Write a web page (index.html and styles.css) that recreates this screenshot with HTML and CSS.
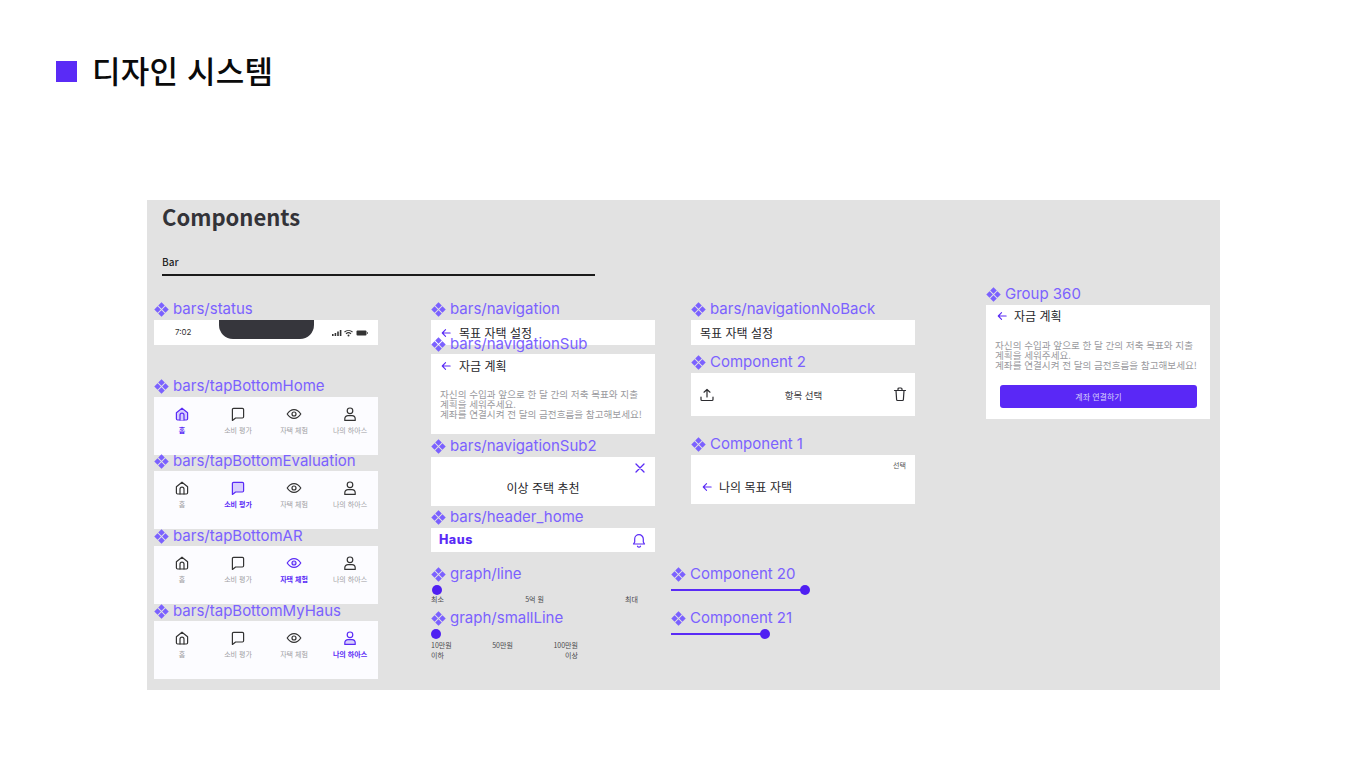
FILE: index.html
```html
<!DOCTYPE html>
<html lang="ko">
<head>
<meta charset="utf-8">
<title>디자인 시스템</title>
<link rel="stylesheet" href="styles.css">
</head>
<body>
<svg class="sprite" aria-hidden="true">
  <symbol id="comp" viewBox="0 0 16 16"><path d="M8 .3 11.5 3.800 8 7.300 4.500 3.800zM3.800 4.500 7.300 8 3.800 11.500 .3 8zM12.200 4.500 15.700 8 12.200 11.500 8.700 8zM8 8.700 11.500 12.200 8 15.700 4.500 12.200z" fill="currentColor"/></symbol>
  <symbol id="home" viewBox="0 0 20 20"><path d="M3 8.500 10 2.800l7 5.700V16a1.500 1.500 0 0 1-1.500 1.500h-11A1.500 1.500 0 0 1 3 16z"/><path d="M7.500 17.500v-6a2.500 2.500 0 0 1 5 0v6"/></symbol>
  <symbol id="chat" viewBox="0 0 20 20"><path d="M3 4.500A1.500 1.500 0 0 1 4.500 3h11A1.500 1.500 0 0 1 17 4.500v9a1.500 1.500 0 0 1-1.500 1.500H7l-4 3z"/></symbol>
  <symbol id="eye" viewBox="0 0 20 20"><path d="M1.500 10S5 4.500 10 4.500 18.500 10 18.500 10 15 15.500 10 15.500 1.500 10 1.500 10z" fill="none"/><circle cx="10" cy="10" r="2.500"/></symbol>
  <symbol id="person" viewBox="0 0 20 20"><circle cx="10" cy="6" r="3.500" fill="none"/><path d="M3.500 18v-2a4 4 0 0 1 4-4h5a4 4 0 0 1 4 4v2z"/></symbol>
  <symbol id="back" viewBox="0 0 12 12"><path d="M11 6H1.500M5.500 2 1.500 6l4 4"/></symbol>
</svg>

<header class="slide-title">
  <span class="square"></span>
  <h1>디자인 시스템</h1>
</header>

<main class="frame">
  <h2 class="heading">Components</h2>
  <div class="section">Bar</div>

  <section class="node n-status">
    <div class="label"><svg class="diamond"><use href="#comp"/></svg>bars/status</div>
    <div class="panel status">
      <span class="clock">7:02</span>
      <span class="notch"></span>
      <svg class="sys" width="36" height="8" viewBox="0 0 36 8">
        <path d="M0 5h1.600v2H0zM2.600 4h1.600v3H2.600zM5.200 2.500h1.600V7H5.200zM7.800 1h1.600v6H7.800z" fill="#333"/>
        <path d="M12.500 3a6 6 0 0 1 8 0M14 4.800a3.600 3.600 0 0 1 5 0" fill="none" stroke="#333" stroke-width="1.100"/>
        <circle cx="16.500" cy="6.400" r="1" fill="#333"/>
        <rect x="24.500" y="1.500" width="10" height="5" rx="1" fill="#333"/>
        <rect x="35" y="3" width="1" height="2" fill="#777"/>
      </svg>
    </div>
  </section>

  <section class="node n-home">
    <div class="label"><svg class="diamond"><use href="#comp"/></svg>bars/tapBottomHome</div>
    <div class="panel tabs">
      <div class="tab active"><svg class="ico"><use href="#home"/></svg><span>홈</span></div>
      <div class="tab"><svg class="ico"><use href="#chat"/></svg><span>소비 평가</span></div>
      <div class="tab"><svg class="ico"><use href="#eye"/></svg><span>자택 체험</span></div>
      <div class="tab"><svg class="ico"><use href="#person"/></svg><span>나의 하아스</span></div>
    </div>
  </section>

  <section class="node n-eval">
    <div class="label low"><svg class="diamond"><use href="#comp"/></svg>bars/tapBottomEvaluation</div>
    <div class="panel tabs">
      <div class="tab"><svg class="ico"><use href="#home"/></svg><span>홈</span></div>
      <div class="tab active"><svg class="ico"><use href="#chat"/></svg><span>소비 평가</span></div>
      <div class="tab"><svg class="ico"><use href="#eye"/></svg><span>자택 체험</span></div>
      <div class="tab"><svg class="ico"><use href="#person"/></svg><span>나의 하아스</span></div>
    </div>
  </section>

  <section class="node n-ar">
    <div class="label low"><svg class="diamond"><use href="#comp"/></svg>bars/tapBottomAR</div>
    <div class="panel tabs">
      <div class="tab"><svg class="ico"><use href="#home"/></svg><span>홈</span></div>
      <div class="tab"><svg class="ico"><use href="#chat"/></svg><span>소비 평가</span></div>
      <div class="tab active"><svg class="ico"><use href="#eye"/></svg><span>자택 체험</span></div>
      <div class="tab"><svg class="ico"><use href="#person"/></svg><span>나의 하아스</span></div>
    </div>
  </section>

  <section class="node n-my">
    <div class="label low"><svg class="diamond"><use href="#comp"/></svg>bars/tapBottomMyHaus</div>
    <div class="panel tabs">
      <div class="tab"><svg class="ico"><use href="#home"/></svg><span>홈</span></div>
      <div class="tab"><svg class="ico"><use href="#chat"/></svg><span>소비 평가</span></div>
      <div class="tab"><svg class="ico"><use href="#eye"/></svg><span>자택 체험</span></div>
      <div class="tab active"><svg class="ico"><use href="#person"/></svg><span>나의 하아스</span></div>
    </div>
  </section>

  <section class="node n-nav">
    <div class="label"><svg class="diamond"><use href="#comp"/></svg>bars/navigation</div>
    <div class="panel bar"><svg class="back"><use href="#back"/></svg><span class="bar-title">목표 자택 설정</span></div>
  </section>

  <section class="node n-sub">
    <div class="label low"><svg class="diamond"><use href="#comp"/></svg>bars/navigationSub</div>
    <div class="panel sub">
      <div class="sub-head"><svg class="back"><use href="#back"/></svg><span class="bar-title">자금 계획</span></div>
      <p class="desc">자신의 수입과 앞으로 한 달 간의 저축 목표와 지출<br>계획을 세워주세요.<br>계좌를 연결시켜 전 달의 금전흐름을 참고해보세요!</p>
    </div>
  </section>

  <section class="node n-sub2">
    <div class="label"><svg class="diamond"><use href="#comp"/></svg>bars/navigationSub2</div>
    <div class="panel sub2">
      <svg class="close" width="10" height="10" viewBox="0 0 10 10"><path d="M1 1l8 8M9 1 1 9"/></svg>
      <span class="bar-title">이상 주택 추천</span>
    </div>
  </section>

  <section class="node n-header">
    <div class="label"><svg class="diamond"><use href="#comp"/></svg>bars/header_home</div>
    <div class="panel head-home">
      <span class="logo">Haus</span>
      <svg class="bell" width="14" height="15" viewBox="0 0 14 15"><path d="M1.500 11h11l-1.200-2V6a4.300 4.300 0 0 0-8.600 0v3zM5.500 13.200a1.700 1.700 0 0 0 3 0"/></svg>
    </div>
  </section>

  <section class="node n-line">
    <div class="label"><svg class="diamond"><use href="#comp"/></svg>graph/line</div>
    <span class="dot dot-line"></span>
    <div class="scale scale-line"><span>최소</span><span>5억 원</span><span>최대</span></div>
  </section>

  <section class="node n-small">
    <div class="label"><svg class="diamond"><use href="#comp"/></svg>graph/smallLine</div>
    <span class="dot dot-small"></span>
    <div class="scale scale-small"><span>10만원</span><span>50만원</span><span>100만원</span></div>
    <div class="scale scale-small2"><span>이하</span><span>이상</span></div>
  </section>

  <section class="node n-noback">
    <div class="label"><svg class="diamond"><use href="#comp"/></svg>bars/navigationNoBack</div>
    <div class="panel bar noback"><span class="bar-title">목표 자택 설정</span></div>
  </section>

  <section class="node n-c2">
    <div class="label"><svg class="diamond"><use href="#comp"/></svg>Component 2</div>
    <div class="panel c2">
      <svg class="tool" width="14" height="14" viewBox="0 0 14 14"><path d="M7 9V1.500M4 4.200 7 1.500l3 2.700M1 9v2.500A1 1 0 0 0 2 12.500h10a1 1 0 0 0 1-1V9"/></svg>
      <span class="c2-title">항목 선택</span>
      <svg class="tool" width="14" height="15" viewBox="0 0 14 15"><path d="M1.500 3.500h11M3 3.500l.6 9a1 1 0 0 0 1 1h4.800a1 1 0 0 0 1-1l.6-9M5 3.500V2a1 1 0 0 1 1-1h2a1 1 0 0 1 1 1v1.500"/></svg>
    </div>
  </section>

  <section class="node n-c1">
    <div class="label"><svg class="diamond"><use href="#comp"/></svg>Component 1</div>
    <div class="panel c1">
      <span class="c1-select">선택</span>
      <div class="c1-row"><svg class="back"><use href="#back"/></svg><span class="bar-title">나의 목표 자택</span></div>
    </div>
  </section>

  <section class="node n-c20">
    <div class="label"><svg class="diamond"><use href="#comp"/></svg>Component 20</div>
    <div class="slider s-20"></div>
  </section>

  <section class="node n-c21">
    <div class="label"><svg class="diamond"><use href="#comp"/></svg>Component 21</div>
    <div class="slider s-21"></div>
  </section>

  <section class="node n-group">
    <div class="label"><svg class="diamond"><use href="#comp"/></svg>Group 360</div>
    <div class="panel group">
      <div class="sub-head group-head"><svg class="back"><use href="#back"/></svg><span class="bar-title">자금 계획</span></div>
      <p class="desc group-desc">자신의 수입과 앞으로 한 달 간의 저축 목표와 지출<br>계획을 세워주세요.<br>계좌를 연결시켜 전 달의 금전흐름을 참고해보세요!</p>
      <div class="cta">계좌 연결하기</div>
    </div>
  </section>
</main>
</body>
</html>
```
FILE: styles.css
```css
* { box-sizing: border-box; }
html, body { margin: 0; padding: 0; }
body {
  width: 1366px;
  height: 768px;
  overflow: hidden;
  background: #fff;
  font-family: "Inter", "Noto Sans CJK KR", sans-serif;
  padding: 51px 0 0 56px;
}
.sprite { position: absolute; width: 0; height: 0; }

.slide-title { display: flex; align-items: center; gap: 15px; height: 40px; }
.square { width: 21px; height: 21px; background: #5a2bf6; }
h1 {
  margin: 0;
  height: 40px;
  font: 500 31px/38px "Noto Sans CJK KR", sans-serif;
  letter-spacing: 0.2px;
  color: #0a0a0a;
}

.frame {
  position: relative;
  width: 1073px;
  height: 490px;
  margin: 109px 0 0 91px;
  background: #e2e2e2;
  padding: 0 15px;
}
.heading {
  margin: 0;
  height: 36px;
  font: 700 22px/33px "Noto Sans CJK KR", sans-serif;
  color: #333338;
}
.section {
  width: 433px;
  height: 26px;
  margin-top: 14px;
  border-bottom: 2px solid #1a1a1a;
  font: 500 10px/24px "Noto Sans CJK KR", sans-serif;
  color: #222;
}

.node { position: absolute; width: 224px; }
.label {
  display: flex;
  align-items: center;
  gap: 4px;
  height: 20px;
  margin-bottom: 1px;
  position: relative;
  white-space: nowrap;
  font: 400 15px/20px "Inter", sans-serif;
  color: #7b61ff;
}
.low { padding-top: 2px; }
.diamond { width: 15px; height: 15px; color: #7b61ff; flex: none; }
.panel { background: #fff; width: 224px; }

.n-status { left: 7px; top: 99px; }
.n-home { left: 7px; top: 176px; }
.n-eval { left: 7px; top: 250px; }
.n-ar { left: 7px; top: 325px; }
.n-my { left: 7px; top: 400px; }
.n-nav { left: 284px; top: 99px; }
.n-sub { left: 284px; top: 133px; }
.n-sub2 { left: 284px; top: 236px; }
.n-header { left: 284px; top: 307px; }
.n-line { left: 284px; top: 364px; }
.n-small { left: 284px; top: 408px; }
.n-noback { left: 544px; top: 99px; }
.n-c2 { left: 544px; top: 152px; }
.n-c1 { left: 544px; top: 234px; }
.n-c20 { left: 524px; top: 364px; }
.n-c21 { left: 524px; top: 408px; }
.n-group { left: 839px; top: 84px; }

/* status */
.status {
  height: 25px;
  display: flex;
  justify-content: space-between;
  align-items: center;
  padding: 0 10px 0 21px;
}
.clock { font: 400 8px/1 "Inter", sans-serif; color: #333; margin-bottom: 2px; }
.notch {
  position: absolute;
  left: 65px;
  top: 21px;
  width: 95px;
  height: 19px;
  background: #36363c;
  border-radius: 0 0 14px 14px;
}
.sys { display: block; }

/* tabs */
.tabs {
  height: 58px;
  background: #fcfcff;
  display: grid;
  grid-template-columns: repeat(4, 56px);
  padding-top: 9px;
  align-content: start;
}
.tab {
  display: flex;
  flex-direction: column;
  align-items: center;
  gap: 3px;
  font: 400 7px/10px "Noto Sans CJK KR", sans-serif;
  color: #a0a0a4;
  white-space: nowrap;
}
.ico {
  width: 16px;
  height: 16px;
  fill: none;
  stroke: #333;
  stroke-width: 1.500;
  stroke-linejoin: round;
  stroke-linecap: round;
}
.active { color: #5a2bf6; font-weight: 700; }
.active .ico { stroke: #5a2bf6; fill: #d8cffd; }

/* nav bars */
.bar { height: 25px; display: flex; align-items: center; padding: 0 0 0 10px; gap: 8px; }
.noback { padding: 1px 0 0 9px; }
.back {
  width: 10px;
  height: 10px;
  flex: none;
  fill: none;
  stroke: #5a2bf6;
  stroke-width: 1.300;
  stroke-linecap: round;
  stroke-linejoin: round;
}
.bar-title { font: 400 12px/16px "Noto Sans CJK KR", sans-serif; color: #26262a; white-space: nowrap; }
.sub { height: 80px; }
.sub-head { height: 24px; display: flex; align-items: center; gap: 8px; padding-left: 10px; }
.desc {
  margin: 11px 0 0 9px;
  font: 400 9.600px/10px "Noto Sans CJK KR", sans-serif;
  color: #9a9a9e;
  white-space: nowrap;
}
.group-desc { margin-top: 13px; }
.sub2 { height: 49px; display: flex; flex-direction: column; align-items: center; padding-top: 6px; }
.close { align-self: flex-end; margin-right: 10px; fill: none; stroke: #5a2bf6; stroke-width: 1.300; stroke-linecap: round; }
.sub2 .bar-title { margin-top: 7px; }
.head-home { height: 24px; display: flex; justify-content: space-between; align-items: center; padding: 0 9px 0 8px; }
.logo { font: 800 12.500px/1 "Inter", sans-serif; letter-spacing: 0.5px; color: #5a2bf6; }
.bell { fill: none; stroke: #5a2bf6; stroke-width: 1.200; stroke-linecap: round; stroke-linejoin: round; }

/* graphs */
.dot { display: block; width: 10px; height: 10px; border-radius: 50%; background: #4f1ff2; }
.dot-line { margin: 0 0 0 1px; }
.dot-small { margin: 0; }
.scale { display: flex; font: 400 7px/10px "Noto Sans CJK KR", sans-serif; color: #4a4a4e; white-space: nowrap; }
.scale-line { width: 207px; justify-content: space-between; margin-top: -1px; }
.scale-small { width: 147px; justify-content: space-between; margin-top: 1px; }
.scale-small2 { width: 147px; justify-content: space-between; }

/* components */
.c2 { height: 43px; display: flex; justify-content: space-between; align-items: center; padding: 0 8px 0 9px; }
.tool { fill: none; stroke: #2c2c30; stroke-width: 1.200; stroke-linecap: round; stroke-linejoin: round; flex: none; }
.c2-title { font: 400 9.500px/12px "Noto Sans CJK KR", sans-serif; color: #3a3a3e; }
.c1 { height: 49px; display: flex; flex-direction: column; padding: 5px 9px 0 11px; }
.c1-select { align-self: flex-end; font: 400 7px/10px "Noto Sans CJK KR", sans-serif; color: #555; }
.c1-row { display: flex; align-items: center; gap: 7px; margin-top: 9px; }

.slider { position: relative; height: 2px; margin-top: 5px; background: #5a2bf6; }
.slider::after {
  content: "";
  position: absolute;
  right: -5px;
  top: -4px;
  width: 10px;
  height: 10px;
  border-radius: 50%;
  background: #4f1ff2;
}
.s-20 { width: 134px; }
.s-21 { width: 94px; }

.group { height: 114px; }
.group-head { height: 22px; padding-left: 11px; gap: 7px; }
.cta {
  width: 197px;
  height: 23px;
  margin: 15px 0 0 14px;
  border-radius: 3px;
  background: #5a28f6;
  color: #d9d2fb;
  font: 400 8px/23px "Noto Sans CJK KR", sans-serif;
  text-align: center;
}
```
